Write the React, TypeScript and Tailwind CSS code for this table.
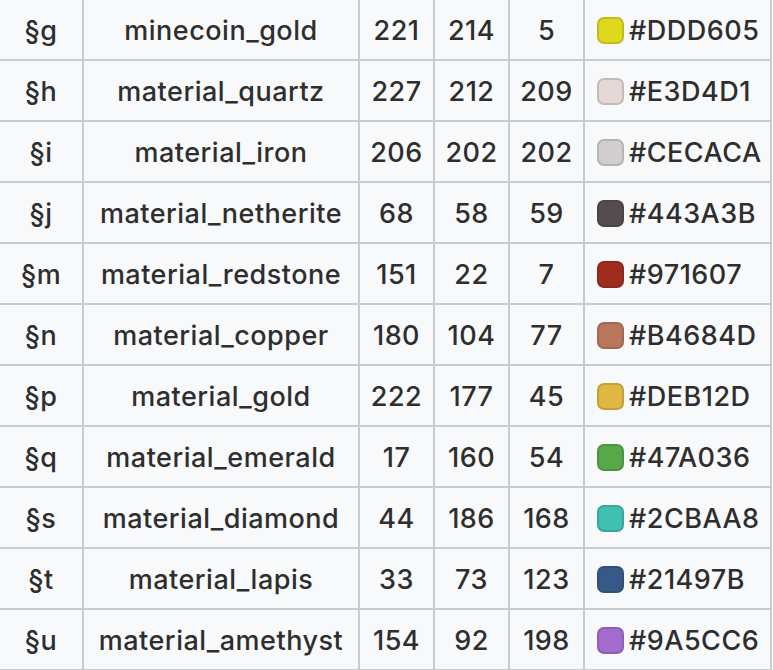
const rows: [string, string, number, number, number, string][] = [
  ['§g', 'minecoin_gold', 221, 214, 5, '#DDD605'],
  ['§h', 'material_quartz', 227, 212, 209, '#E3D4D1'],
  ['§i', 'material_iron', 206, 202, 202, '#CECACA'],
  ['§j', 'material_netherite', 68, 58, 59, '#443A3B'],
  ['§m', 'material_redstone', 151, 22, 7, '#971607'],
  ['§n', 'material_copper', 180, 104, 77, '#B4684D'],
  ['§p', 'material_gold', 222, 177, 45, '#DEB12D'],
  ['§q', 'material_emerald', 17, 160, 54, '#47A036'],
  ['§s', 'material_diamond', 44, 186, 168, '#2CBAA8'],
  ['§t', 'material_lapis', 33, 73, 123, '#21497B'],
  ['§u', 'material_amethyst', 154, 92, 198, '#9A5CC6'],
];

const cell = 'h-[59px] pt-[3px] bg-[#f8f9fa] flex items-center justify-center';

export default function App() {
  return (
    <div className="w-[773px] h-[670px] overflow-hidden bg-white">
      <div
        className="-mt-[2px] -ml-[2px] w-[774px] grid grid-cols-[82px_274px_73px_73px_73px_185px] gap-[2px] p-[2px] bg-[#c8ccd1] text-[#2e2e2e] text-[27px] font-medium tracking-[0.5px]"
        style={{ fontFamily: 'Inter, "Noto Sans", sans-serif' }}
      >
        {rows.map(([code, name, r, g, b, hex]) => (
          <div key={code} className="contents">
            <div className={cell}>{code}</div>
            <div className={cell}>{name}</div>
            <div className={cell}>{r}</div>
            <div className={cell}>{g}</div>
            <div className={cell}>{b}</div>
            <div className="h-[59px] pt-[1px] bg-[#f8f9fa] flex items-center pl-[12px] gap-[5px]">
              <span
                className="w-[27px] h-[27px] rounded-[7px] border-2 border-black/15 shrink-0 opacity-90"
                style={{ backgroundColor: hex }}
              />
              <span className="pt-[2px]">{hex}</span>
            </div>
          </div>
        ))}
      </div>
    </div>
  );
}
